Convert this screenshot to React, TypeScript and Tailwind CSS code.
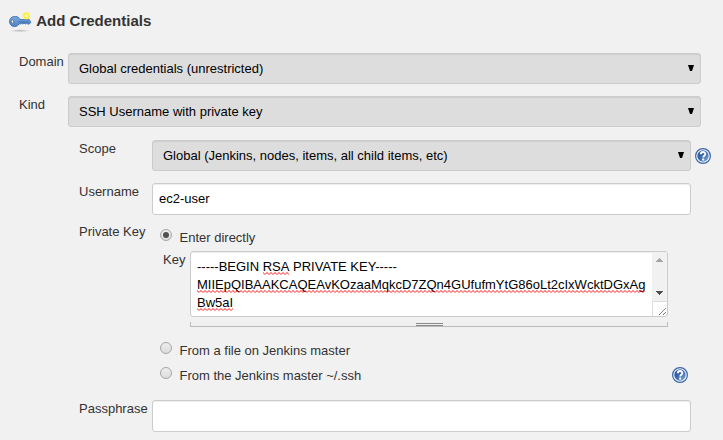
import type { ReactNode } from "react";

const privateKey = "MIIEpQIBAAKCAQEAvKOzaaMqkcD7ZQn4GUfufmYtG86oLt2cIxWcktDGxAg";

function KeyIcon() {
  return (
    <svg className="block" width="24" height="25" viewBox="0 0 24 25" fill="none">
      <defs>
        <linearGradient id="blueKey" x1="0" y1="0" x2="0" y2="1">
          <stop offset="0" stopColor="#7ba8db" />
          <stop offset="1" stopColor="#4f83c2" />
        </linearGradient>
        <radialGradient id="keyShadow">
          <stop offset="0" stopColor="#999" stopOpacity=".65" />
          <stop offset="1" stopColor="#999" stopOpacity="0" />
        </radialGradient>
      </defs>
      <ellipse cx="12" cy="22.700" rx="10.500" ry="1.500" fill="url(#keyShadow)" />
      <path
        d="M6.600 8.500c-3 0-5.100 2.200-5.100 5s2.200 5.100 5.100 5.100c2 0 3.500-1.100 4.400-2.800l1.500.2 1.200-.8 1.200.8 1.200-.8 1.200.8 1.200-.8 1.200.8h1.700l1.400-1.600-1.500-2.800h-9c-.9-1.900-2.700-3.100-4.700-3.100Z"
        fill="url(#blueKey)"
        stroke="#3f6fae"
        strokeWidth=".9"
      />
      <path d="M10.500 14h10" stroke="#3465a4" strokeWidth=".8" />
      <ellipse cx="4.400" cy="13.500" rx="1.200" ry="1.900" fill="#eee" stroke="#3465a4" strokeWidth=".7" />
      <circle cx="18.300" cy="7.700" r="3.700" fill="#fff36a" fillOpacity=".65" />
      <circle cx="18.300" cy="7.700" r="2.200" fill="#fffde0" stroke="#fff03d" strokeWidth="1.800" />
    </svg>
  );
}

function HelpIcon() {
  return (
    <svg className="block shrink-0" width="16" height="16" viewBox="0 0 16 16">
      <defs>
        <linearGradient id="helpBlue" x1="0" y1="0" x2="1" y2="1">
          <stop offset="0" stopColor="#244f92" />
          <stop offset=".5" stopColor="#3d6eae" />
          <stop offset="1" stopColor="#87acd4" />
        </linearGradient>
      </defs>
      <circle cx="8" cy="8" r="7.400" fill="#f2f7fc" stroke="#3b66a5" strokeWidth="1.200" />
      <circle cx="8" cy="8" r="5.700" fill="url(#helpBlue)" />
      <path d="M5.800 6.200C5.800 3.300 10.300 3.300 10.300 6c0 1.700-2.100 1.800-2.100 3.500" fill="none" stroke="#fff" strokeWidth="1.900" />
      <rect x="7.200" y="10.500" width="2" height="2" fill="#fff" />
    </svg>
  );
}

function Select({ children }: { children: ReactNode }) {
  return (
    <div className="flex h-[31px] w-full items-center justify-between rounded-[3px] border border-[#ccc] bg-[#ddd] pr-[6px] pl-[10px] text-black shadow-[inset_0_1px_1px_rgba(0,0,0,0.075)]">
      <span>{children}</span>
      <svg className="-mt-px" width="6" height="6" viewBox="0 0 6 6">
        <path d="M0 0h6L4 6H2Z" fill="#000" />
      </svg>
    </div>
  );
}

function TextField({ value }: { value: string }) {
  return (
    <input
      defaultValue={value}
      className="block h-8 w-[539px] rounded-[3px] border border-[#ccc] bg-white px-[6px] pb-[2px] text-black shadow-[inset_0_1px_1px_rgba(0,0,0,0.075)] outline-none"
    />
  );
}

function Radio({ checked = false }: { checked?: boolean }) {
  return (
    <span className="flex size-[12px] shrink-0 items-center justify-center rounded-full border border-[#a6a6a6] bg-linear-to-b from-[#eee] to-[#dcdcdc]">
      {checked && <span className="size-[6px] rounded-full bg-[#505050]" />}
    </span>
  );
}

function Misspelled({ id, children }: { id: string; children: ReactNode }) {
  return (
    <span className="relative inline-block">
      {children}
      <svg className="absolute top-[14px] left-0 h-[3px] w-full">
        <defs>
          <pattern id={id} width="4" height="3" patternUnits="userSpaceOnUse">
            <path d="M-1 1.700L0 .700L2 2.400L4 .700L5 1.700" fill="none" stroke="#f00" strokeWidth=".8" />
          </pattern>
        </defs>
        <rect width="100%" height="3" fill={`url(#${id})`} />
      </svg>
    </span>
  );
}

export default function App() {
  return (
    <div className="h-[440px] w-[723px] overflow-hidden bg-[#f1f1f1] font-['Liberation_Sans',Arial,sans-serif] text-[13px] leading-[18px] text-[#333]">
      <header className="flex h-[53px] pt-2 pl-2">
        <KeyIcon />
        <h1 className="pt-1 pl-[4.250px] text-[15px] font-bold">Add Credentials</h1>
      </header>

      <div className="flex h-[43px] pl-[19px]">
        <label className="w-[49px] shrink-0">Domain</label>
        <div className="w-[633px]">
          <Select>Global credentials (unrestricted)</Select>
        </div>
      </div>
      <div className="flex h-[44px] pl-[19px]">
        <label className="w-[49px] shrink-0">Kind</label>
        <div className="w-[633px]">
          <Select>SSH Username with private key</Select>
        </div>
      </div>

      <div className="flex h-[43px] pl-[79px]">
        <label className="w-[73px] shrink-0">Scope</label>
        <div className="w-[539px]">
          <Select>Global (Jenkins, nodes, items, all child items, etc)</Select>
        </div>
        <div className="pt-2 pl-1">
          <HelpIcon />
        </div>
      </div>
      <div className="flex h-[40px] pl-[79px]">
        <label className="w-[73px] shrink-0">Username</label>
        <TextField value="ec2-user" />
      </div>

      <div className="flex h-[177px] pl-[79px]">
        <label className="w-[81px] shrink-0">Private Key</label>
        <div className="w-[528px]">
          <div className="flex h-[28px] gap-[7.500px] pt-[6px]">
            <Radio checked />
            <span>Enter directly</span>
          </div>
          <div className="flex h-[87px]">
            <label className="w-[30px] shrink-0 pl-[3px]">Key</label>
            <div className="w-[478px]">
              <div className="flex h-[66px] overflow-hidden rounded-[3px] border border-[#ccc] bg-white shadow-[inset_0_1px_1px_rgba(0,0,0,0.075)]">
                <div className="w-[461px] shrink-0 pt-[6px] pl-[6px] whitespace-nowrap text-black">
                  <div className="h-[18px]">
                    -----BEGIN <Misspelled id="wave-rsa">RSA</Misspelled> PRIVATE KEY-----
                  </div>
                  <div className="h-[18px]">
                    <Misspelled id="wave-body">{privateKey}</Misspelled>
                  </div>
                  <div className="h-[18px]">
                    <Misspelled id="wave-tail">Bw5aI</Misspelled>
                  </div>
                </div>
                <div className="flex w-[15px] flex-col">
                  <div className="flex h-[49px] flex-col items-center justify-between bg-[#f1f1f1] pt-[6px] pb-[6px]">
                    <svg width="7" height="4" viewBox="0 0 7 4" shapeRendering="crispEdges">
                      <path d="M3 0h1v1h1v1h1v1h1v1H0V3h1V2h1V1h1Z" fill="#a3a3a3" />
                    </svg>
                    <svg width="7" height="4" viewBox="0 0 7 4" shapeRendering="crispEdges">
                      <path d="M0 0h7v1H6v1H5v1H4v1H3V3H2V2H1V1H0Z" fill="#505050" />
                    </svg>
                  </div>
                  <svg className="h-[15px] w-[15px] border-t border-l border-[#ddd]" viewBox="0 0 14 14">
                    <path d="M6 13L13 6M10 13L13 10" stroke="#555" strokeWidth=".9" strokeDasharray="1.400 .200" />
                  </svg>
                </div>
              </div>
              <div className="mt-[5px] flex h-[5px] flex-col items-center border-x border-b border-[#bbb] bg-[#efefef]">
                <span className="mt-[1px] h-[3px] w-[27px] border-y border-[#888]" />
              </div>
            </div>
          </div>
          <div className="flex h-[25px] gap-[7.500px] pt-[4px]">
            <Radio />
            <span>From a file on Jenkins master</span>
          </div>
          <div className="flex gap-[7.500px] pt-[4px]">
            <Radio />
            <span className="grow">From the Jenkins master ~/.ssh</span>
            <HelpIcon />
          </div>
        </div>
      </div>

      <div className="flex pl-[79px]">
        <label className="w-[73px] shrink-0">Passphrase</label>
        <TextField value="" />
      </div>
    </div>
  );
}
